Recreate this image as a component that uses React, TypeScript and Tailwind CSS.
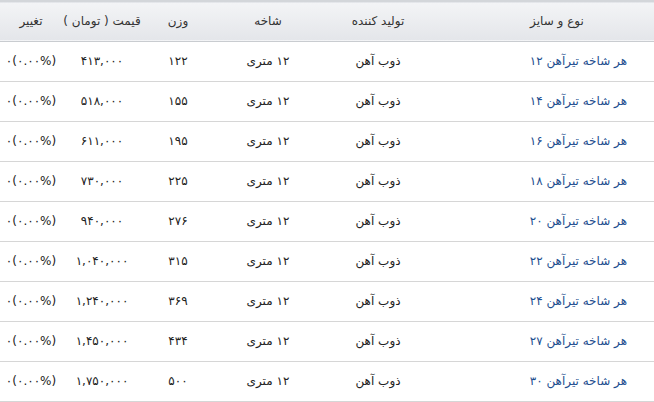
import React from 'react';

const rows = [
    { size: '۱۲', weight: '۱۲۲', price: '۴۱۳,۰۰۰' },
    { size: '۱۴', weight: '۱۵۵', price: '۵۱۸,۰۰۰' },
    { size: '۱۶', weight: '۱۹۵', price: '۶۱۱,۰۰۰' },
    { size: '۱۸', weight: '۲۲۵', price: '۷۳۰,۰۰۰' },
    { size: '۲۰', weight: '۲۷۶', price: '۹۴۰,۰۰۰' },
    { size: '۲۲', weight: '۳۱۵', price: '۱,۰۴۰,۰۰۰' },
    { size: '۲۴', weight: '۳۶۹', price: '۱,۲۴۰,۰۰۰' },
    { size: '۲۷', weight: '۴۳۴', price: '۱,۴۵۰,۰۰۰' },
    { size: '۳۰', weight: '۵۰۰', price: '۱,۷۵۰,۰۰۰' },
];

const App = () => {
    return (
        <div
            dir="rtl"
            className="w-[654px] h-[402px] overflow-hidden bg-white text-[12px] text-[#222]"
            style={{ fontFamily: '"DejaVu Sans", Tahoma, sans-serif' }}
        >
            <table className="w-[654px] table-fixed border-collapse">
                <colgroup>
                    <col className="w-[220px]" />
                    <col className="w-[112px]" />
                    <col className="w-[108px]" />
                    <col className="w-[72px]" />
                    <col className="w-[80px]" />
                    <col className="w-[62px]" />
                </colgroup>
                {/* header */}
                <thead>
                    <tr className="h-[40px] bg-gradient-to-b from-[#f3f4f6] to-[#e4e6ea] border-t-2 border-t-[#d3d6da] border-b border-b-[#c9ccd0] text-[#333]">
                        <th className="p-0 font-normal text-center pl-[26px]">نوع و سایز</th>
                        <th className="p-0 font-normal text-center">تولید کننده</th>
                        <th className="p-0 font-normal text-center">شاخه</th>
                        <th className="p-0 font-normal text-center">وزن</th>
                        <th className="p-0 font-normal text-center whitespace-nowrap">قیمت ( تومان )</th>
                        <th className="p-0 font-normal text-center">تغییر</th>
                    </tr>
                </thead>
                <tbody>
                    {rows.map((r) => (
                        <tr key={r.size} className="h-[40px] border-b border-b-[#d6d6d6]">
                            <td className="p-0 text-right pr-[27px] text-[#1e4e8f]">هر شاخه تیرآهن {r.size}</td>
                            <td className="p-0 text-center">ذوب آهن</td>
                            <td className="p-0 text-center">۱۲ متری</td>
                            <td className="p-0 text-center">{r.weight}</td>
                            <td className="p-0 text-center">
                                <span dir="ltr">{r.price}</span>
                            </td>
                            <td className="p-0 text-center whitespace-nowrap">
                                <span dir="ltr">۰(۰.۰۰%)</span>
                            </td>
                        </tr>
                    ))}
                </tbody>
            </table>
        </div>
    );
};

export default App;
